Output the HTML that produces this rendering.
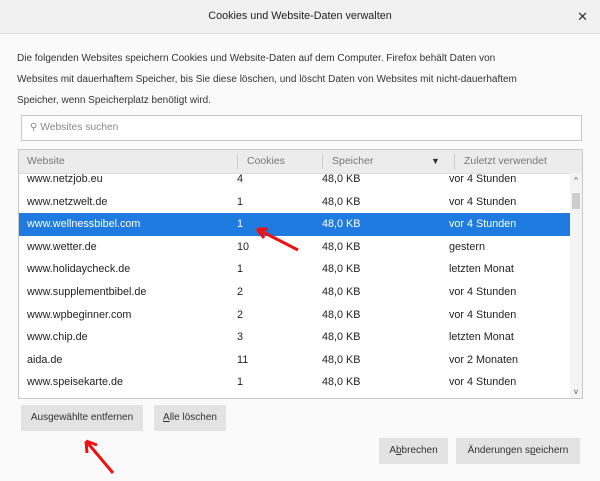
<html><head><style>
body{margin:0;width:600px;height:481px;background:#fafafa;font-family:"Liberation Sans",sans-serif;font-size:10.8px;color:#222;position:relative;overflow:hidden}
.t{position:absolute;top:0;left:0;width:600px;height:33px;background:#f1f1f1;border-bottom:1px solid #ddd;text-align:center;line-height:33px;font-size:10.8px}
.x{position:absolute;right:12px;top:0;font-size:13px;color:#333}
.p{position:absolute;left:17px;top:48px;width:570px;line-height:21px;font-size:10px;color:#333}
.s{position:absolute;left:21px;top:115px;width:559px;height:24px;border:1px solid #c8c8c8;background:#fff;color:#888;line-height:24px;font-size:10.3px}
.tb{position:absolute;left:18px;top:149px;width:563px;height:248px;border:1px solid #c8c8c8;background:#fff;overflow:hidden}
.h{height:23px;background:#ececec;border-bottom:1px solid #ddd;position:relative;color:#777;line-height:23px;font-size:10.5px}
.h span,.r span{position:absolute}
.h i{position:absolute;top:4px;width:1px;height:15px;background:#ccc}
.r{height:22.6px;position:relative;line-height:22px}
.sel{background:#1f7be0;color:#fff}
.sb{position:absolute;right:0;top:23px;width:12px;height:225px;background:#f4f4f4}
.b{position:absolute;height:26px;background:#e3e3e3;line-height:26px;text-align:center;color:#333;font-size:10px}
</style></head><body>
<div class="t">Cookies und Website-Daten verwalten<span class="x">✕</span></div>
<div class="p">Die folgenden Websites speichern Cookies und Website-Daten auf dem Computer. Firefox behält Daten von<br>Websites mit dauerhaftem Speicher, bis Sie diese löschen, und löscht Daten von Websites mit nicht-dauerhaftem<br>Speicher, wenn Speicherplatz benötigt wird.</div>
<div class="s"><span style="margin-left:8px;font-size:10px">⚲</span> Websites suchen</div>
<div class="tb">
<div class="h"><span style="left:8px">Website</span><i style="left:218px"></i><span style="left:228px">Cookies</span><i style="left:303px"></i><span style="left:313px">Speicher</span><span style="left:412px;font-size:9px;color:#333">▼</span><i style="left:435px"></i><span style="left:445px">Zuletzt verwendet</span></div>
<div style="position:relative;top:-6px">
<div class="r"><span style="left:8px">www.netzjob.eu</span><span style="left:218px">4</span><span style="left:303px">48,0 KB</span><span style="left:430px">vor 4 Stunden</span></div>
<div class="r"><span style="left:8px">www.netzwelt.de</span><span style="left:218px">1</span><span style="left:303px">48,0 KB</span><span style="left:430px">vor 4 Stunden</span></div>
<div class="r sel" style="margin-right:12px"><span style="left:8px">www.wellnessbibel.com</span><span style="left:218px">1</span><span style="left:303px">48,0 KB</span><span style="left:430px">vor 4 Stunden</span></div>
<div class="r"><span style="left:8px">www.wetter.de</span><span style="left:218px">10</span><span style="left:303px">48,0 KB</span><span style="left:430px">gestern</span></div>
<div class="r"><span style="left:8px">www.holidaycheck.de</span><span style="left:218px">1</span><span style="left:303px">48,0 KB</span><span style="left:430px">letzten Monat</span></div>
<div class="r"><span style="left:8px">www.supplementbibel.de</span><span style="left:218px">2</span><span style="left:303px">48,0 KB</span><span style="left:430px">vor 4 Stunden</span></div>
<div class="r"><span style="left:8px">www.wpbeginner.com</span><span style="left:218px">2</span><span style="left:303px">48,0 KB</span><span style="left:430px">vor 4 Stunden</span></div>
<div class="r"><span style="left:8px">www.chip.de</span><span style="left:218px">3</span><span style="left:303px">48,0 KB</span><span style="left:430px">letzten Monat</span></div>
<div class="r"><span style="left:8px">aida.de</span><span style="left:218px">11</span><span style="left:303px">48,0 KB</span><span style="left:430px">vor 2 Monaten</span></div>
<div class="r"><span style="left:8px">www.speisekarte.de</span><span style="left:218px">1</span><span style="left:303px">48,0 KB</span><span style="left:430px">vor 4 Stunden</span></div>
</div>
<div class="sb"><div style="font-size:8px;text-align:center;color:#555;margin-top:3px">^</div><div style="margin:8px 2px 0;height:16px;background:#cdcdcd"></div><div style="position:absolute;bottom:2px;width:12px;text-align:center;font-size:8px;color:#555">v</div></div>
</div>
<div class="b" style="left:21px;top:405px;width:122px">Ausgewählte entfernen</div>
<div class="b" style="left:154px;top:405px;width:72px"><u>A</u>lle löschen</div>
<div class="b" style="left:379px;top:438px;width:69px">A<u>b</u>brechen</div>
<div class="b" style="left:456px;top:438px;width:124px">Änderungen s<u>p</u>eichern</div>
<svg style="position:absolute;left:0;top:0" width="600" height="481"><g stroke="#e11" stroke-width="3" fill="none"><path d="M298 250L257 229M257 229L268 229M257 229L264 238"/><path d="M113 473L86 441M86 441L87 453M86 441L97 445"/></g></svg>
</body></html>
